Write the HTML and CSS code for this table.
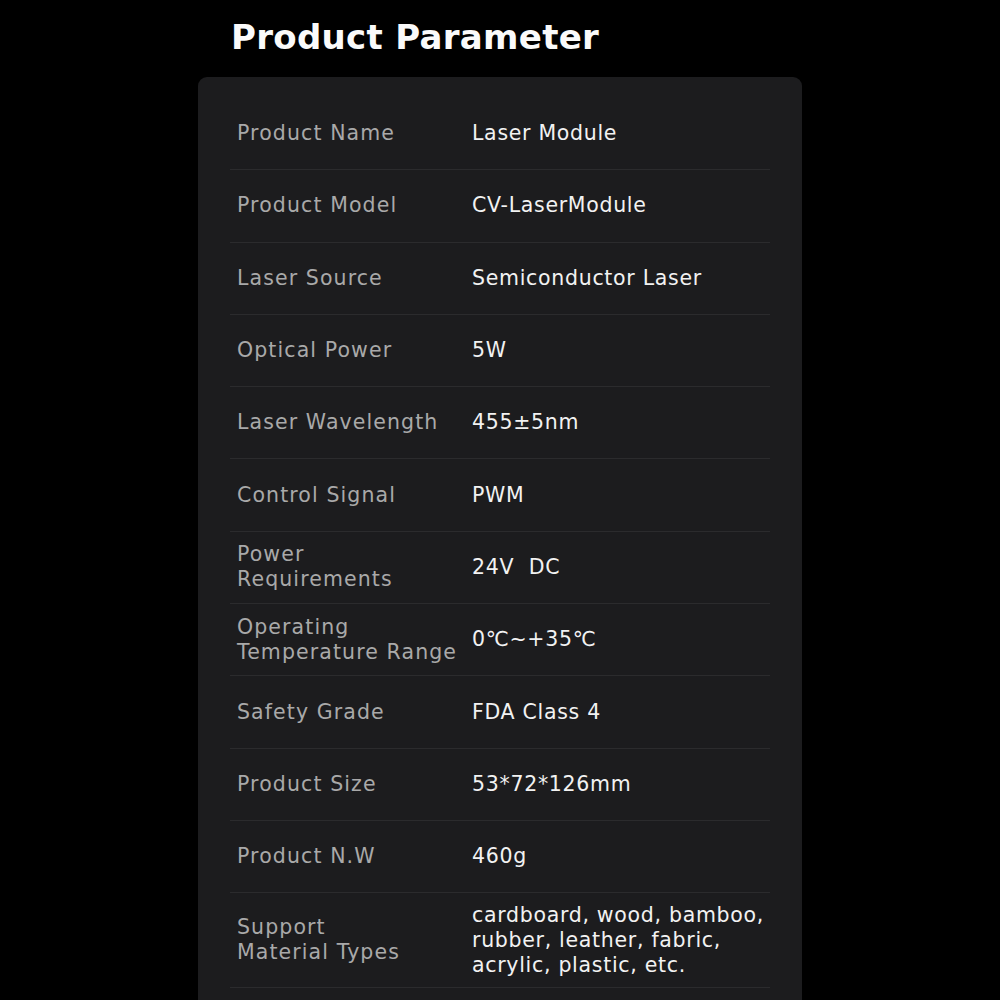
FILE: index.html
```html
<!DOCTYPE html>
<html lang="en">
<head>
<meta charset="utf-8">
<title>Product Parameter</title>
<link rel="stylesheet" href="styles.css">
</head>
<body>
<main class="page">
  <h1 class="title">Product Parameter</h1>
  <section class="card">
    <div class="row"><div class="label">Product Name</div><div class="value">Laser Module</div></div>
    <div class="row"><div class="label">Product Model</div><div class="value">CV-LaserModule</div></div>
    <div class="row"><div class="label">Laser Source</div><div class="value">Semiconductor Laser</div></div>
    <div class="row"><div class="label">Optical Power</div><div class="value">5W</div></div>
    <div class="row"><div class="label">Laser Wavelength</div><div class="value">455±5nm</div></div>
    <div class="row"><div class="label">Control Signal</div><div class="value">PWM</div></div>
    <div class="row"><div class="label">Power<br>Requirements</div><div class="value">24V&nbsp; DC</div></div>
    <div class="row"><div class="label">Operating<br>Temperature Range</div><div class="value">0℃~+35℃</div></div>
    <div class="row"><div class="label">Safety Grade</div><div class="value">FDA Class 4</div></div>
    <div class="row"><div class="label">Product Size</div><div class="value">53*72*126mm</div></div>
    <div class="row"><div class="label">Product N.W</div><div class="value">460g</div></div>
    <div class="row row-tall"><div class="label">Support<br>Material Types</div><div class="value">cardboard, wood, bamboo,<br>rubber, leather, fabric,<br>acrylic, plastic, etc.</div></div>
  </section>
</main>
</body>
</html>
```

FILE: styles.css
```css
* { box-sizing: border-box; }
html, body {
  margin: 0;
  padding: 0;
  background: #000;
}
body {
  font-family: "DejaVu Sans", "Noto Sans", sans-serif;
  color: #f2f2f2;
}
.page {
  width: 604px;
  margin-left: 198px;
  display: flex;
  flex-direction: column;
}
.title {
  margin: 0;
  padding: 15px 0 0 33px;
  height: 77px;
  font-size: 34px;
  font-weight: 700;
  line-height: 44px;
  color: #fafafa;
  letter-spacing: 0.3px;
}
.card {
  background: #1c1c1e;
  border-radius: 9px;
  padding: 21px 32px 0;
  min-height: 940px;
}
.row {
  display: grid;
  grid-template-columns: 235px 1fr;
  align-items: center;
  min-height: 72.3px;
  padding-left: 7px;
  border-bottom: 1px solid #2b2b2d;
  font-size: 20.5px;
  line-height: 25px;
  letter-spacing: 0.7px;
}
.row-tall {
  min-height: 95px;
  padding-top: 9px;
  padding-bottom: 9px;
}
.label {
  color: #a9a9a9;
  letter-spacing: 1.1px;
}
.value {
  color: #f2f2f2;
}
```
